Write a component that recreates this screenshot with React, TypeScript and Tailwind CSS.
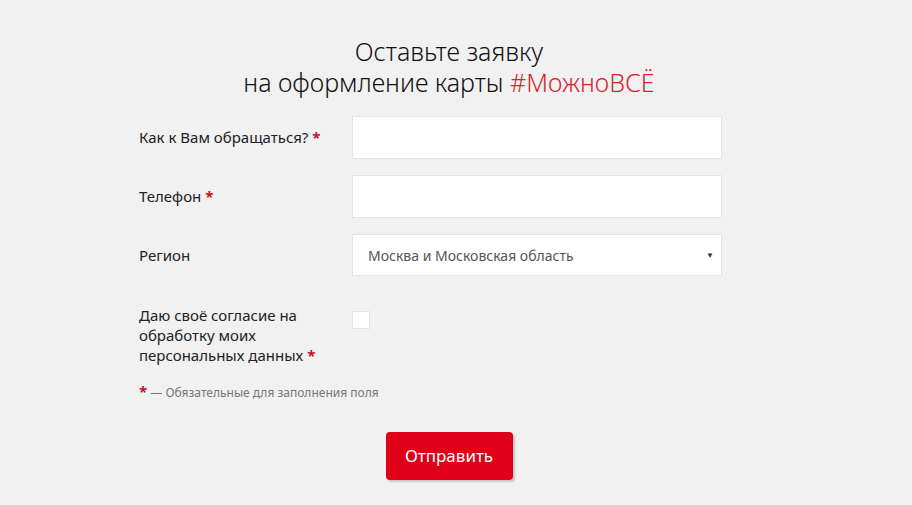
export default function App() {
  const font = { fontFamily: '"Noto Sans", "Open Sans", sans-serif' };
  return (
    <div className="min-h-[505px] w-full bg-[#f1f1f1] text-[#222]" style={font}>
      <div className="ml-[139px] w-[620px] pt-[36px]">
        <h1 className="text-center text-[25px] leading-[31px] font-light text-[#111]">
          Оставьте заявку
          <br />
          на оформление карты <span className="text-[#d9232d]">#МожноВСЁ</span>
        </h1>

        <form className="mt-[18px]">
          <div className="flex items-center h-[43px]">
            <label className="w-[213px] text-[15px]">
              Как к Вам обращаться? <span className="text-[#c8102e] font-bold">*</span>
            </label>
            <input type="text" className="h-[43px] w-[370px] bg-white border border-[#e4e4e4] outline-none px-4" />
          </div>

          <div className="flex items-center h-[43px] mt-[16px]">
            <label className="w-[213px] text-[15px]">
              Телефон <span className="text-[#c8102e] font-bold">*</span>
            </label>
            <input type="text" className="h-[43px] w-[370px] bg-white border border-[#e4e4e4] outline-none px-4" />
          </div>

          <div className="flex items-center h-[42px] mt-[16px]">
            <label className="w-[213px] text-[15px]">Регион</label>
            <div className="relative h-[42px] w-[370px] bg-white border border-[#e4e4e4] flex items-center px-[15px]">
              <span className="text-[14px] text-[#555]">Москва и Московская область</span>
              <span className="absolute right-[7px] top-[14px] text-[8px] text-[#333]">▼</span>
            </div>
          </div>

          <div className="flex items-start mt-[29px]">
            <label className="w-[213px] text-[15px] leading-[20px]">
              Даю своё согласие на
              <br />
              обработку моих
              <br />
              персональных данных <span className="text-[#c8102e] font-bold">*</span>
            </label>
            <span className="mt-[6px] block h-[18px] w-[18px] bg-white border border-[#e4e4e4]" />
          </div>

          <p className="mt-[18px] text-[12px] leading-[16px] text-[#777]">
            <span className="text-[#c8102e] font-bold text-[15px]">*</span> — Обязательные для заполнения поля
          </p>

          <div className="flex justify-center mt-[31px]">
            <button
              type="button"
              className="h-[48px] w-[127px] rounded-[4px] bg-[#e0001a] text-white text-[17px] shadow-[2px_2px_2px_rgba(0,0,0,0.18)]"
            >
              Отправить
            </button>
          </div>
        </form>
      </div>
    </div>
  );
}
